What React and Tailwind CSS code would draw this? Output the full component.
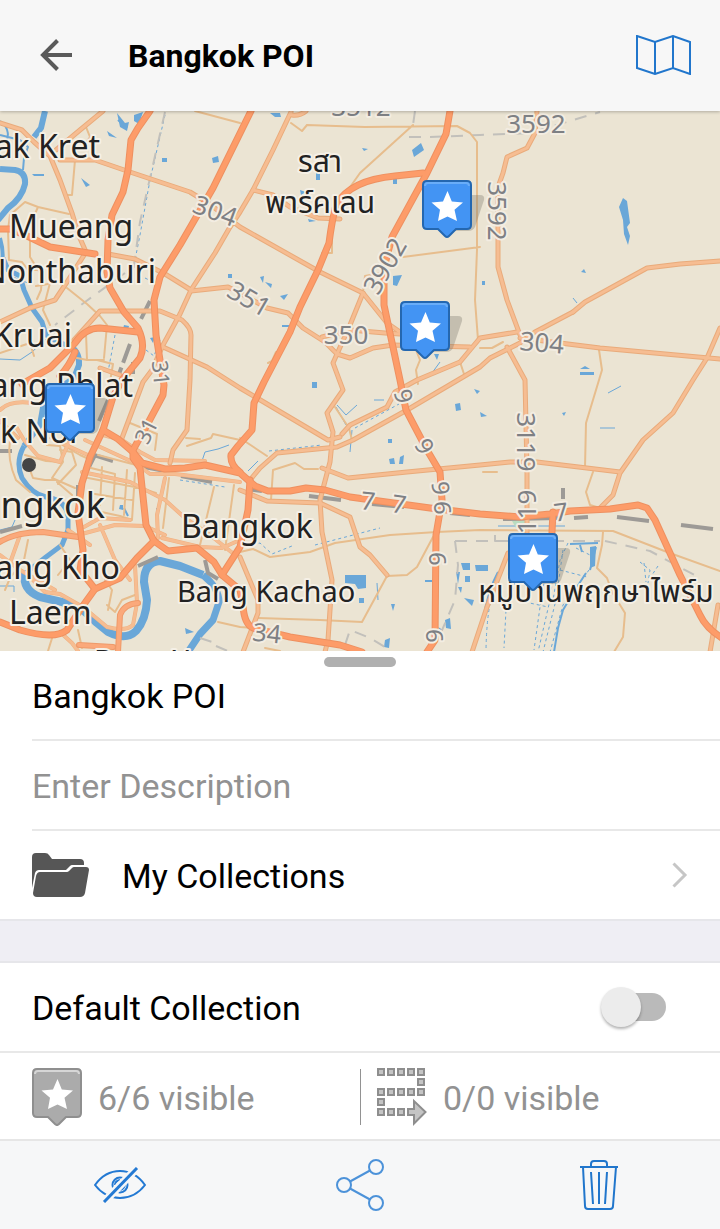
import React from "react";

const WATER = [
  [6, "M45 111 41 128 34 137"],
  [2, "M0 121C10 128 9 138 5 143M0 135 20 140 28 147 24 158 23 170"],
  [6, "M0 169 15 170Q26 172 25 184Q22 198 8 208L-2 220"],
  [4, "M0 238Q4 252 2 262"],
  [5, "M3 258 8 270 20 276 24 290 32 308 42 322 46 335 54 340 66 345"],
  [6, "M66 344Q80 350 79 365L74 378 60 388 44 402 40 425 24 446"],
  [5, "M24 446Q15 462 22 478Q32 494 46 497Q66 500 68 516V530L62 545 46 557 26 573"],
  [8, "M25 573Q22 590 40 597L62 602 84 611 97 623 108 632Q126 641 136 631Q146 620 147 600L144 582Q144 562 160 561L180 566 203 575"],
  [7, "M203 575Q219 588 219 602L213 620 200 634 188 652"],
  [1, "M0 359 20 360 32 352 45 340 55 334M0 530 12 527 15 520M0 586H14V592M202 461 205 452 218 449 229 445M8 275 28 283"],
  [1, "M337 405 346 415 357 405M352 430 350 452M248 471 258 461M374 400 384 400M336 407 346 425M443 497V505M377 583 378 600M600 428H615M498 526H565M608 393 621 386M573 298 577 303M432 373 440 362"],
  [2, "M157 508V522M118 120 127 128M124 508 128 516M570 544 598 543M580 545 582 552M596 547 590 570M498 572Q488 590 483 620M586 573 575 590 563 610 558 628 554 652"],
];

const WATER_AREAS = [
  "M117 113 125 123 129 122 127 131 120 127ZM107 131 117 138 109 136ZM81 178 90 185 86 187ZM32 174H44V176H34ZM134 115 143 112 139 124 134 121ZM162 158H167V162H162ZM212 158 218 156 219 162 213 163ZM228 274H232V278H228Z",
  "M623 198 627 201 630 223 627 227 630 236 628 245 624 234 623 220 619 207Z",
  "M580 369 585 366 590 369ZM580 372H594V375H580ZM581 272 584 269 586 273ZM482 281H485V285H482Z",
  "M412 150 421 143 424 150 414 157ZM393 276 402 275 397 286 393 285ZM362 148 368 149 364 151ZM270 113 280 113 281 117 275 117ZM316 172H320V180H316ZM393 179H397V184H393ZM260 277 264 276 263 283ZM265 282 272 284 271 288ZM280 296 288 294 284 300ZM300 190 306 192 301 195ZM308 219 316 221 309 222ZM282 325H290V327H282ZM434 354 439 354 437 360Z",
  "M345 575H366V588L358 589 355 584 345 583ZM359 598H364V603H359ZM312 382H317V388H312ZM455 404 460 403 461 410 456 411ZM388 439H392V443H388ZM389 459 394 458 395 464 390 464ZM400 457 404 455 403 464 399 464Z",
  "M461 563 470 563 470 570 463 570ZM475 565H488V571H476ZM465 576H470V582H465ZM456 572 460 572 458 584ZM458 587 462 587 461 593ZM464 598 474 600 472 606ZM445 620 450 618 451 629 446 628ZM438 627 443 630 441 632ZM391 604 395 604 393 611ZM385 640 390 638 389 648 384 647ZM425 580H432V582H425ZM480 412 487 416 481 417ZM562 413 566 412 564 416ZM474 389 480 391 477 394Z",
  "M124 325 129 326 128 330 123 329ZM120 505 123 505 123 510 119 509ZM150 338 155 337 153 343ZM590 547 596 546 595 566 590 568ZM185 628 194 632 186 634ZM190 627 188 636",
];

const MINOR = [
  "M86 127 90 137 86 143M75 160 72 195H68M195 111 240 123M69 214 38 207 25 202 10 215 8 230 9 260 22 262 28 270 40 270M38 207 34 216M30 240 30 257 42 276 41 290 37 299M50 283 43 310 50 325",
  "M48 284 36 286M67 288 87 304 100 316 107 325 104 358M0 353 30 343 34 356M86 333 87 360 104 360M72 357 87 360 97 360 113 364 110 382",
  "M307 125 365 127 457 126 470 133 477 142 477 250 475 300 478 340M307 125 302 131 291 123M413 125 360 173 348 190M403 257 480 247",
  "M332 222V253H322M385 272 365 276 363 292M276 352 272 361 268 363M416 350 420 360 416 370 418 384",
  "M599 350 602 370 599 380 586 423 585 467M593 472 586 492 590 505 600 508M603 532 602 545 597 568 607 578 612 592 625 613 623 637 614 652M480 348 492 348 503 342",
  "M240 552 253 549 270 557 310 552 335 543 390 535 437 532 480 530 613 531 667 552 720 571",
  "M433 537 417 567 407 575 387 576 362 622 320 620 258 618M271 500 273 470 295 463 304 469 318 469M240 438 267 456M335 407 349 428 352 440M460 362 464 374",
  "M265 648 280 651M240 627 255 628M218 622 240 627M186 438 200 439M187 446 211 438 213 434 240 440M130 423 157 434 155 450M483 472H497",
  "M10 440Q7 460 16 480L30 492M25 455 46 461 62 462M30 470 33 478 45 480 55 480M47 445 60 446 63 462 52 478 75 488M50 438 80 455 91 460",
  "M60 450 72 452 76 465 58 484M57 482 72 495M83 477 140 488 156 493M102 467 100 505M98 455 140 466M95 494 132 500M87 467 115 474 113 510M127 470 124 515M135 473 132 520M97 511 120 516 132 520M214 487 200 545M234 485 225 550M169 478 163 528",
  "M105 580 112 590 108 610M135 595 122 600 115 612 107 605M48 651 53 635M78 630 82 648M28 540 24 560 10 578 5 590M60 545 70 560 58 575",
];

const SECONDARY = [
  "M0 123 22 130 34 142 50 156 60 180 72 213 79 236 86 252 67 282 55 300 30 308 0 322",
  "M103 111 80 130 56 150M60 160 95 160 130 172 190 192 208 203 240 227 320 272 363 293 387 323 400 332M108 254 135 259 165 274 191 290",
  "M306 111Q300 116 292 115M291 112 273 150 253 190 240 212 230 227 215 253 191 290 180 314 163 345 152 370 143 382 122 438",
  "M253 190 273 195 290 207 318 218 340 219M191 291 228 287 240 293 267 308 288 313 303 328 325 342 337 354 350 358 373 348 393 345 470 347",
  "M322 337 350 330 385 333 400 334M363 293 350 325 333 363 343 390 327 413 333 432 330 462 320 500 322 532 332 580 328 640 325 652",
  "M74 340 100 311 160 311 182 320Q191 328 191 335L190 380 187 430 173 450 170 463M163 347 207 367 240 388 328 440 340 437M120 375 100 368",
  "M417 380 395 392 387 407 350 425 342 434M417 380 460 362 480 338 517 332M573 312 535 332 520 343 490 358 480 367 407 410 353 440 337 447 277 453 260 468 250 480",
  "M537 111 535 133 527 148 507 157 503 173 498 187V267L507 300 520 335M573 312 585 302 647 268 680 264 720 261M520 338 600 348 720 359",
  "M720 328 707 358 693 380 673 413 643 440 620 473 613 495 600 508M507 347 525 380 527 470 527 540M508 553 487 607 472 652",
  "M322 468 348 478 407 472 480 465 510 462 537 462 620 472M240 490 267 501 320 503 350 517 360 547 370 555 387 575M240 557 258 600 258 613 243 652M718 605 710 652",
];

const STREETS = [
  "M103 435 122 440 140 452 155 460 205 461M85 440 135 463 150 474 175 474 240 482M55 440 90 456",
  "M82 472 130 482 165 500 185 518 210 535 235 555M165 478 157 515 158 538M162 538 200 547 222 548 240 540",
  "M78 535 115 525 145 526 165 535M84 527 100 518 130 520M100 525 115 560 130 580M135 565 137 603 133 625Q125 632 107 627L83 607 60 594 45 592 33 580",
  "M0 421 18 438M0 410Q10 400 32 403M15 425 24 440 38 456 60 462 70 440M68 530 90 545",
  "M0 555 20 570 55 590M60 632 72 643 78 651M20 535 10 563",
];

const PRIMARY = [
  "M0 229H10L25 235 50 247 95 254",
  "M150 111 138 128 131 140 128 170 123 192 112 215 108 240 107 272 110 288 124 312 138 328Q146 345 140 358L122 380 113 397 103 430 90 457 82 483 78 513 83 550 80 570 95 589",
  "M22 384 50 368 75 343Q85 328 100 328L138 332M75 352Q70 365 60 376",
  "M251 111 213 188 180 245 160 277 154 300 156 335 160 360 164 385 163 395 147 425 133 450 133 458 140 468 146 525 154 541",
  "M103 430 118 439 133 452 142 463 165 469 185 468 205 465 240 473 255 486 268 491 290 491 306 488 325 490 350 497 430 508 480 514 520 517 550 514 570 511 610 509 638 505 647 508 655 520 680 575 700 615Q706 628 722 638",
  "M450 111 446 134 427 173 392 237 384 268 384 305 400 380 406 410 427 450 440 472 442 500 436 535 435 640 427 652",
  "M423 173 395 176Q350 180 336 205Q332 220 329 243L318 270 300 307 290 332 264 382 254 403 252 430 238 446 231 455Q230 465 240 472",
  "M250 480 248 510 240 547 222 575M553 512 552 532",
  "M154 541 137 558 120 578 95 589 82 607 67 630Q55 640 20 630L0 622",
  "M154 541 168 551 197 548 214 562 222 575 240 590 243 605Q244 624 253 628L290 637 340 645 362 652",
];

const ARTERIES = [
  "M-2 543Q15 532 43 532L78 537M118 652 120 615Q124 604 138 603M79 645 113 647",
];

const LABELS = [
  ["ak Kret", 100, 158, 32, "end"],
  ["Mueang", 9, 238, 32, "start"],
  ["Nonthaburi", 156, 283, 32, "end"],
  ["Kruai", 72, 347, 32, "end"],
  ["ang Phlat", 133, 397, 32, "end"],
  ["k Noi", 0, 443, 32, "start"],
  ["ngkok", 105, 518, 36, "end"],
  ["ang Kho", 120, 579, 32, "end"],
  ["Laem", 9, 624, 32, "start"],
  ["Bangkok", 181, 538, 32, "start"],
  ["Bang Kachao", 177, 602, 29, "start"],
  ["Bang Yo", 94, 671, 29, "start"],
  ["รสา", 320, 172, 30, "middle"],
  ["พาร์คเลน", 320, 213, 30, "middle"],
  ["หมู่บ้านพฤกษาไพร์ม", 596, 602, 30, "middle"],
];

const ROAD_NUMBERS = [
  ["3512", 361, 107, 0, 26],
  ["3592", 536, 124, 0, 26],
  ["3592", 497, 211, 90, 26],
  ["304", 215, 211, 20, 26],
  ["351", 249, 299, 30, 26],
  ["350", 346, 335, 0, 26],
  ["304", 542, 343, 5, 26],
  ["3902", 385, 266, -60, 26],
  ["3119", 526, 442, 90, 26],
  ["119", 527, 512, -90, 26],
  ["31", 161, 373, 84, 22],
  ["31", 146, 431, -64, 22],
  ["9", 404, 396, 75, 24],
  ["9", 425, 446, 62, 24],
  ["9", 441, 488, 85, 24],
  ["9", 442, 508, -90, 24],
  ["9", 437, 559, -90, 24],
  ["9", 434, 636, -90, 24],
  ["7", 368, 501, 6, 25],
  ["7", 399, 504, 8, 25],
  ["7", 561, 512, -7, 25],
  ["34", 267, 633, 6, 25],
];

const MARKERS = [[422, 180], [400, 301], [45, 383], [508, 533]];

function PinShape({ fill, edge, shine }) {
  return (
    <g>
      <path
        d="M5 1H45Q49 1 49 5V45Q49 49 45 49H34L27 56Q25 58 23 56L16 49H5Q1 49 1 45V5Q1 1 5 1Z"
        fill={fill}
        stroke={edge}
        strokeWidth="2"
      />
      <path d="M3 6Q3 3 6 3H44Q47 3 47 6" fill="none" stroke={shine} strokeWidth="2" />
      <path d="M25.500 11 29.800 21.500 41 22.500 32.500 29.800 35 41 25.500 36.500 16 41 18 29.800 9.500 22.500 21 21.500Z" fill="#fff" />
    </g>
  );
}

function Strokes({ paths, color, width, dash }) {
  return (
    <g fill="none" stroke={color} strokeWidth={width} strokeDasharray={dash} strokeLinejoin="round" strokeLinecap={dash ? "butt" : "round"}>
      {paths.map((d) => (
        <path key={d} d={d} />
      ))}
    </g>
  );
}

function CollectionMap() {
  return (
    <svg viewBox="0 111 720 540" className="block aspect-[4/3] w-full bg-[#ebe4d3]" role="img" aria-label="Bangkok POI">
      <g fill="none" stroke="#6aa7d8" strokeLinejoin="round">
        {WATER.map(([w, d]) => (
          <path key={d} d={d} strokeWidth={w} />
        ))}
      </g>
      <g fill="#6aa7d8">
        {WATER_AREAS.map((d) => (
          <path key={d} d={d} />
        ))}
      </g>
      <path d="M512 521H526V528H516Z" fill="#b9dcc0" />
      <Strokes
        color="#6aa7d8"
        width={1}
        dash="3 3"
        paths={[
          "M165 115 150 180 140 235 132 275M269 451 322 445M355 428 399 404M315 545 380 528M247 546 260 543 272 554 292 546M503 570Q487 590 486 650M511 575 506 610 504 648M557 545 550 600 538 652M563 550 556 600 543 652M560 570 587 577M525 602 548 607M115 335 108 372M589 570 563 605 550 652M640 562 650 570 648 583M658 566 652 575M146 350 154 356 160 340M180 480 225 487M145 278 155 283M568 543 560 560 553 600M516 570 512 600M548 560 541 600 534 650M644 563 646 582M576 548 590 555",
        ]}
      />
      <Strokes
        color="#c2c0bb"
        width={2}
        dash="12 9"
        paths={[
          "M165 112 140 222 133 272M125 273 85 302 55 325M409 137H430L480 135 530 133 600 112M415 111 413 125M455 541 500 541 530 541M455 541 458 565 455 600 440 635M345 645 350 630 370 638 385 647M605 541 650 551 700 578M200 638 212 642M216 646 230 652M495 535V541H600",
        ]}
      />
      <Strokes color="#9d9a96" width={4} paths={["M150 301 139 323M130 344 119 374M133 362V374M95 455 80 485M78 485V515"]} dash="20 5" />
      <g fill="none" stroke="#9d9a96" strokeWidth="4">
        <path d="M108 400 99 421M94 455 113 461M139 466 165 471M181 476 212 482M246 489 262 491M309 496 341 500M372 504 404 507M450 513 470 515M503 519 560 518M574 518 588 517M617 517 649 521M681 525 713 529M563 488V499M0 451H12M0 532 22 526M138 566 158 557M205 560 208 573 218 579" />
      </g>
      <Strokes paths={MINOR} color="#e7bd8d" width={2} />
      <Strokes paths={STREETS} color="#efb081" width={4} />
      <Strokes paths={STREETS} color="#f6bd92" width={3} />
      <Strokes paths={SECONDARY} color="#e9ab7b" width={5} />
      <Strokes paths={SECONDARY} color="#f6bd92" width={3} />
      <Strokes paths={ARTERIES} color="#ee9a6a" width={6} />
      <Strokes paths={ARTERIES} color="#fba97b" width={4} />
      <Strokes paths={PRIMARY} color="#ee9060" width={7} />
      <Strokes paths={PRIMARY} color="#fd9c69" width={5} />
      <circle cx="29" cy="465" r="7" fill="#444" />
      <g className="font-['Noto_Sans','Noto_Sans_Thai',sans-serif]" strokeLinejoin="round" paintOrder="stroke">
        <g fill="#7e8084" stroke="#f3ede2" strokeWidth="4" textAnchor="middle">
          {ROAD_NUMBERS.map(([text, x, y, angle, size]) => (
            <text key={`${text}-${x}`} transform={`translate(${x} ${y}) rotate(${angle})`} y={Math.round(size * 0.36)} fontSize={size}>
              {text}
            </text>
          ))}
        </g>
        <g fill="#222" stroke="#f5f0e6" strokeWidth="4">
          {LABELS.map(([text, x, y, size, anchor]) => (
            <text key={text} x={x} y={y} fontSize={size} textAnchor={anchor}>
              {text}
            </text>
          ))}
        </g>
      </g>
      {MARKERS.map(([x, y]) => (
        <g key={x} transform={`translate(${x} ${y})`}>
          <path d="M44 15H58Q63 15 62 20L53 47Q51 51 46 51H32Z" fill="#7c776d" fillOpacity="0.35" />
          <PinShape fill="#4394f3" edge="#2467b0" shine="#69adf8" />
        </g>
      ))}
    </svg>
  );
}

function RouteIcon() {
  const squares = [
    [0, 0], [10, 0], [20, 0], [30, 0], [40, 0], [40, 10],
    [0, 20], [10, 20], [20, 20], [30, 20], [40, 20],
    [0, 30], [0, 40], [10, 40], [20, 40],
  ];
  return (
    <svg viewBox="0 0 50 58" className="h-[58px] w-[50px] shrink-0" fill="#c4c4c4" stroke="#8e8e8e" strokeWidth="2" aria-hidden="true">
      {squares.map(([x, y]) => (
        <rect key={`${x}-${y}`} x={x + 1} y={y + 1} width="6" height="6" />
      ))}
      <path d="M31 41H37V33L48.500 44 37 55.500V47H31Z" />
    </svg>
  );
}

export default function App() {
  return (
    <div className="w-full bg-white font-[Roboto,sans-serif] text-[34px] leading-10 text-black">
      <header className="relative z-10 flex h-[111px] items-center bg-[#f7f7f7] pr-7 pb-0.5 pl-8 shadow-[0_1px_3px_rgba(0,0,0,0.25)]">
        <button type="button" aria-label="Back" className="flex size-12 items-center justify-center">
          <svg viewBox="0 0 32 32" className="size-8" fill="none" stroke="#5a5a5a" strokeWidth="4" aria-hidden="true">
            <path d="M32 16H3M17.500 1.500 3 16 17.500 30.500" />
          </svg>
        </button>
        <h1 className="ml-12 flex-1 pt-0.5 text-[32px] font-bold">Bangkok POI</h1>
        <button type="button" aria-label="Show map" className="flex h-12 items-center">
          <svg viewBox="0 0 56 40" className="h-10 w-14" fill="none" stroke="#2176cc" strokeWidth="2" aria-hidden="true">
            <path d="M1 1 19 7 37 1 54 7V39L37 33 19 39 1 33ZM19 7V39M37 1V33" />
          </svg>
        </button>
      </header>

      <main>
        <CollectionMap />
        <section className="relative pl-8">
          <div className="absolute top-1.5 left-1/2 h-2.5 w-18 -translate-x-1/2 rounded-full bg-[#b0b0b0]" />
          <input
            type="text"
            aria-label="Collection name"
            defaultValue="Bangkok POI"
            className="block h-[90px] w-full border-b-2 border-[#e8e8e8] pt-0.5 outline-none"
          />
          <input
            type="text"
            aria-label="Description"
            placeholder="Enter Description"
            className="block h-[90px] w-full border-b-2 border-[#e8e8e8] pt-0.5 outline-none placeholder:text-[#929292]"
          />
        </section>

        <button type="button" className="flex h-[90px] w-full items-center border-b-2 border-[#e6e6ea] pr-8 pl-8 text-left">
          <svg viewBox="0 0 58 46" className="h-[46px] w-[58px]" aria-hidden="true">
            <path d="M0 5Q0 1 4 1H13Q16 1 17 3L20 7H48Q52 7 52 11V13H40Q39 13 38 14L34 18H7Q4 18 3 21L0 36Z" fill="#565656" />
            <path d="M8 20H35Q36 20 37 19L40 16Q41 15 42 15H54Q57 15 57 18L53 41Q52 45 48 45H5Q1 45 1 41L4 24Q5 20 8 20Z" fill="#565656" />
          </svg>
          <span className="ml-8 flex-1 pt-0.5">My Collections</span>
          <svg viewBox="0 0 16 26" className="h-[26px] w-4" fill="none" stroke="#c6c6c6" strokeWidth="3" aria-hidden="true">
            <path d="M1.500 1.500 13 13 1.500 24.500" />
          </svg>
        </button>

        <div className="h-[42px] border-b-2 border-[#e6e6ea] bg-[#efeef4]" />

        <div className="flex h-[90px] items-center justify-between border-b-2 border-[#e8e8e8] pr-[54px] pl-8">
          <label htmlFor="default-collection" className="pt-0.5">Default Collection</label>
          <input
            id="default-collection"
            type="checkbox"
            role="switch"
            className="relative h-7 w-15 appearance-none rounded-full bg-[#bababa] before:absolute before:-top-1.5 before:-left-[5px] before:size-10 before:rounded-full before:bg-[#ececec] before:shadow-[0_2px_3px_rgba(0,0,0,0.3)] before:content-[''] checked:before:right-0 checked:before:left-auto"
          />
        </div>

        <div className="grid h-[86px] grid-cols-2 items-center pt-0.5 text-[#929292]">
          <div className="flex items-center gap-4 pl-8">
            <svg viewBox="0 0 50 58" className="h-[58px] w-[50px] shrink-0" aria-hidden="true">
              <PinShape fill="#ababab" edge="#8f8f8f" shine="#d6d6d6" />
            </svg>
            <span className="pt-0.5">6/6 visible</span>
          </div>
          <div className="flex items-center">
            <div className="h-14 w-px bg-[#929292]" />
            <div className="flex items-center gap-4 pl-4">
              <RouteIcon />
              <span className="pt-0.5">0/0 visible</span>
            </div>
          </div>
        </div>
      </main>

      <footer className="grid h-[90px] grid-cols-3 border-t-2 border-[#e6e6e6] bg-[#f6f7f8]">
        <button type="button" aria-label="Hide collection" className="flex items-center justify-center">
          <svg viewBox="0 0 52 36" className="h-9 w-[52px]" fill="none" stroke="#2379d3" strokeWidth="2" aria-hidden="true">
            <path d="M1 18Q11 4 26 4T51 18Q41 31 26 31T1 18Z" />
            <circle cx="26" cy="18" r="7.500" />
            <path d="M21 18Q21 14 26 13M31 18Q30 22 26 23" />
            <path d="M44 0 9 36" stroke="#f6f7f8" strokeWidth="8" />
            <path d="M43 1 10 35" strokeWidth="3" />
          </svg>
        </button>
        <button type="button" aria-label="Share collection" className="flex items-center justify-center">
          <svg viewBox="0 0 48 52" className="h-[52px] w-12" fill="none" stroke="#4c92d9" strokeWidth="2" aria-hidden="true">
            <circle cx="8" cy="26" r="7" />
            <circle cx="40" cy="8" r="7" />
            <circle cx="40" cy="44" r="7" />
            <path d="M14 22.500 34 11.500M14 29.500 34 40.500" />
          </svg>
        </button>
        <button type="button" aria-label="Delete collection" className="flex items-center justify-center">
          <svg viewBox="0 0 40 50" className="h-[50px] w-10" fill="none" stroke="#2176cc" strokeWidth="2" aria-hidden="true">
            <path d="M0 7H38M11 7V4Q11 1 14 1H24Q27 1 27 4V7M3 7 5 46Q5 49 8 49H30Q33 49 33 46L36 7M11 12 13 44M19 12V44M27 12 25 44" />
          </svg>
        </button>
      </footer>
    </div>
  );
}
